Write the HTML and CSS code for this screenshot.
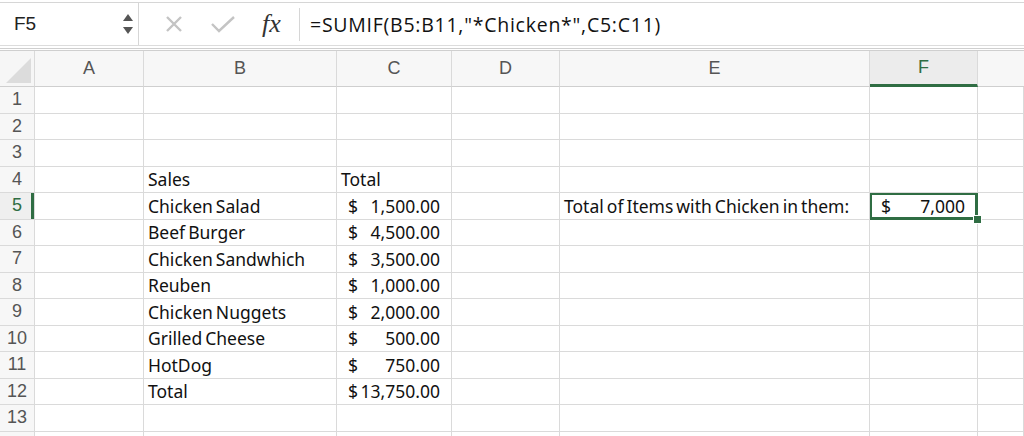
FILE: index.html
```html
<!DOCTYPE html>
<html lang="en">
<head>
    <meta charset="UTF-8">
    <title>SUMIF Chicken</title>
    <link rel="stylesheet" href="styles.css">
</head>
<body>
    <div class="formula-bar">
        <div class="name-box">
            <span class="cell-ref">F5</span>
            <span class="spinner">
                <svg width="12" height="26" viewBox="0 0 12 26">
                    <path d="M6 3 L11 10 L1 10 Z" fill="#555"/>
                    <path d="M6 23 L11 16 L1 16 Z" fill="#555"/>
                </svg>
            </span>
        </div>
        <div class="bar-icons">
            <svg class="bar-icon" width="20" height="20" viewBox="0 0 20 20">
                <path d="M3 3 L17 17 M17 3 L3 17" stroke="#c4c4c4" stroke-width="2.4" fill="none"/>
            </svg>
            <svg class="bar-icon" width="26" height="20" viewBox="0 0 26 20">
                <path d="M2 10 L9 17 L24 3" stroke="#c4c4c4" stroke-width="2.4" fill="none"/>
            </svg>
            <span class="fx">fx</span>
        </div>
        <div class="formula-input">=SUMIF(B5:B11,"*Chicken*",C5:C11)</div>
    </div>

    <div class="sheet">
        <div class="corner"><span class="corner-tri"></span></div>
        <div class="col-head">A</div>
        <div class="col-head">B</div>
        <div class="col-head">C</div>
        <div class="col-head">D</div>
        <div class="col-head">E</div>
        <div class="col-head active">F</div>
        <div class="col-head last"></div>

        <div class="row-head">1</div><div class="cell"></div><div class="cell"></div><div class="cell"></div><div class="cell"></div><div class="cell"></div><div class="cell"></div><div class="cell"></div>
        <div class="row-head">2</div><div class="cell"></div><div class="cell"></div><div class="cell"></div><div class="cell"></div><div class="cell"></div><div class="cell"></div><div class="cell"></div>
        <div class="row-head">3</div><div class="cell"></div><div class="cell"></div><div class="cell"></div><div class="cell"></div><div class="cell"></div><div class="cell"></div><div class="cell"></div>
        <div class="row-head">4</div><div class="cell"></div><div class="cell">Sales</div><div class="cell">Total</div><div class="cell"></div><div class="cell"></div><div class="cell"></div><div class="cell"></div>
        <div class="row-head active">5</div><div class="cell"></div><div class="cell">Chicken Salad</div>
        <div class="cell money"><span>$</span><span>1,500.00</span></div><div class="cell"></div>
        <div class="cell">Total of Items with Chicken in them:</div>
        <div class="cell money selected"><span>$</span><span>7,000</span><i class="handle"></i></div><div class="cell"></div>
        <div class="row-head">6</div><div class="cell"></div><div class="cell">Beef Burger</div>
        <div class="cell money"><span>$</span><span>4,500.00</span></div><div class="cell"></div><div class="cell"></div><div class="cell"></div><div class="cell"></div>
        <div class="row-head">7</div><div class="cell"></div><div class="cell">Chicken Sandwhich</div>
        <div class="cell money"><span>$</span><span>3,500.00</span></div><div class="cell"></div><div class="cell"></div><div class="cell"></div><div class="cell"></div>
        <div class="row-head">8</div><div class="cell"></div><div class="cell">Reuben</div>
        <div class="cell money"><span>$</span><span>1,000.00</span></div><div class="cell"></div><div class="cell"></div><div class="cell"></div><div class="cell"></div>
        <div class="row-head">9</div><div class="cell"></div><div class="cell">Chicken Nuggets</div>
        <div class="cell money"><span>$</span><span>2,000.00</span></div><div class="cell"></div><div class="cell"></div><div class="cell"></div><div class="cell"></div>
        <div class="row-head">10</div><div class="cell"></div><div class="cell">Grilled Cheese</div>
        <div class="cell money"><span>$</span><span>500.00</span></div><div class="cell"></div><div class="cell"></div><div class="cell"></div><div class="cell"></div>
        <div class="row-head">11</div><div class="cell"></div><div class="cell">HotDog</div>
        <div class="cell money"><span>$</span><span>750.00</span></div><div class="cell"></div><div class="cell"></div><div class="cell"></div><div class="cell"></div>
        <div class="row-head">12</div><div class="cell"></div><div class="cell">Total</div>
        <div class="cell money"><span>$</span><span>13,750.00</span></div><div class="cell"></div><div class="cell"></div><div class="cell"></div><div class="cell"></div>
        <div class="row-head">13</div><div class="cell"></div><div class="cell"></div><div class="cell"></div><div class="cell"></div><div class="cell"></div><div class="cell"></div><div class="cell"></div>
        <div class="row-head"></div><div class="cell"></div><div class="cell"></div><div class="cell"></div><div class="cell"></div><div class="cell"></div><div class="cell"></div><div class="cell"></div>
    </div>
</body>
</html>
```

FILE: styles.css
```css
body {
    margin: 0;
    height: 436px;
    overflow: hidden;
    background: #fff;
    font-family: "Liberation Sans", Arial, sans-serif;
}

/* formula bar */
.formula-bar {
    display: flex;
    height: 42px;
    margin-top: 2px;
    border-top: 1px solid #d6d6d6;
    border-bottom: 1px solid #dcdcdc;
    background: #fff;
}

.name-box {
    display: flex;
    align-items: center;
    justify-content: space-between;
    width: 139px;
    box-sizing: border-box;
    padding: 0 4px 0 14px;
    border-right: 1px solid #d6d6d6;
}

.cell-ref {
    font-size: 19px;
    color: #222;
}

.spinner {
    display: flex;
}

.bar-icons {
    display: flex;
    align-items: center;
    width: 160px;
    box-sizing: border-box;
    padding-left: 25px;
    gap: 26px;
}

.fx {
    font-family: "Liberation Serif", "Times New Roman", serif;
    font-style: italic;
    font-size: 26px;
    color: #333;
}

.formula-input {
    flex: 1;
    display: flex;
    align-items: center;
    padding-left: 10px;
    margin: 5px 0 4px;
    border-left: 1px solid #d6d6d6;
    font-family: "Open Sans", "Liberation Sans", sans-serif;
    font-size: 19.5px;
    letter-spacing: 0.75px;
    color: #111;
}

/* grid */
.sheet {
    display: grid;
    grid-template-columns: 35px 109px 193px 115px 108px 310px 108px 1fr;
    grid-template-rows: 36px repeat(14, 26.5px);
    margin-top: 2px;
    border-top: 3px double #cfcfcf;
}

.sheet > div {
    box-sizing: border-box;
    border-right: 1px solid #dadada;
    border-bottom: 1px solid #dadada;
}

.corner {
    position: relative;
    background: #f6f6f6;
    border-bottom-color: #cfcfcf !important;
}

.corner-tri {
    position: absolute;
    right: 3px;
    bottom: 3px;
    width: 0;
    height: 0;
    border-left: 25px solid transparent;
    border-bottom: 25px solid #dcdcdc;
}

.col-head {
    display: flex;
    align-items: center;
    justify-content: center;
    background: #f7f7f7;
    font-size: 18px;
    color: #555;
    border-bottom-color: #cfcfcf !important;
}

.col-head.active {
    background: #ececec;
    color: #2f6d43;
    border-bottom: 3px solid #2f6d43 !important;
}

.col-head.last {
    border-right: none !important;
}

.row-head {
    display: flex;
    align-items: center;
    justify-content: center;
    background: #f7f7f7;
    font-size: 18px;
    color: #555;
}

.row-head.active {
    color: #2f6d43;
    background: #efefef;
    box-shadow: inset -3px 0 0 #2f6d43;
}

.cell {
    display: flex;
    align-items: center;
    padding-left: 4px;
    font-family: "Noto Sans", "Liberation Sans", sans-serif;
    font-size: 17.5px;
    word-spacing: -1.5px;
    color: #111;
    white-space: nowrap;
}

.cell.money {
    justify-content: space-between;
    padding: 0 11px 0 11px;
}

.cell.selected {
    position: relative;
    box-shadow: inset 0 0 0 2px #2f6d43;
    border-color: #2f6d43 !important;
    padding-right: 12px;
}

.handle {
    position: absolute;
    right: -5px;
    bottom: -5px;
    width: 7px;
    height: 7px;
    background: #2f6d43;
    border: 1px solid #fff;
    z-index: 2;
}
```
